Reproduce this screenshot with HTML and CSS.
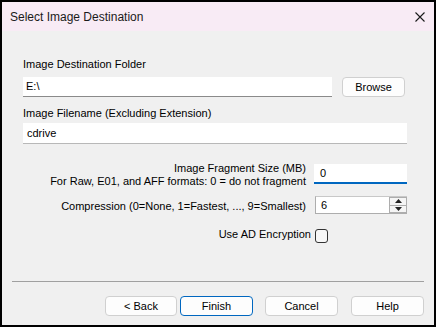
FILE: index.html
```html
<!DOCTYPE html>
<html lang="en">
  <head>
    <meta charset="UTF-8" />
    <meta name="viewport" content="width=device-width, initial-scale=1.0" />
    <title>Select Image Destination</title>
    <link rel="stylesheet" href="styles.css">
  </head>
  <body>
    <div class="window">
      <div class="titlebar">
        <span class="title">Select Image Destination</span>
        <svg class="close" width="10" height="10" viewBox="0 0 10 10">
          <path d="M0.5 0.5 L9.5 9.5 M9.5 0.5 L0.5 9.5" stroke="#1a1a1a" stroke-width="1.1" fill="none" />
        </svg>
      </div>

      <div class="content">
        <div class="label first">Image Destination Folder</div>
        <div class="folderRow">
          <div class="field folder">E:\</div>
          <button class="btn browse">Browse</button>
        </div>

        <div class="label second">Image Filename (Excluding Extension)</div>
        <div class="field filename">cdrive</div>

        <div class="options">
          <div class="optLabel fragLabel">Image Fragment Size (MB)<br>For Raw, E01, and AFF formats: 0 = do not fragment</div>
          <div class="field focused">0</div>

          <div class="optLabel compLabel">Compression (0=None, 1=Fastest, ..., 9=Smallest)</div>
          <div class="spin">
            <div class="spinValue">6</div>
            <div class="spinBtns">
              <span class="arrow"><svg width="7" height="4" viewBox="0 0 7 4"><path d="M3.5 0 L7 4 L0 4 Z" fill="#222" /></svg></span>
              <span class="arrow"><svg width="7" height="4" viewBox="0 0 7 4"><path d="M0 0 L7 0 L3.5 4 Z" fill="#222" /></svg></span>
            </div>
          </div>

          <div class="optLabel encLabel">Use AD Encryption</div>
          <div class="checkCell"><span class="checkbox"></span></div>
        </div>
      </div>

      <div class="footer">
        <div class="separator"></div>
        <div class="buttons">
          <button class="btn">&lt; Back</button>
          <button class="btn default">Finish</button>
          <button class="btn cancel">Cancel</button>
          <button class="btn help">Help</button>
        </div>
      </div>
    </div>
  </body>
</html>
```

FILE: styles.css
```css
* {
  padding: 0;
  margin: 0;
  box-sizing: border-box;
}
body {
  background: #000;
  font-family: "Liberation Sans", Arial, sans-serif;
  font-size: 11px;
  color: #000;
}
.window {
  width: 436px;
  height: 327px;
  border: 2px solid #000;
  background: #f0f0f0;
  display: flex;
  flex-direction: column;
}
.titlebar {
  height: 29px;
  background: #f8ebf5;
  display: flex;
  align-items: center;
  justify-content: space-between;
  padding: 0 9px 0 8px;
}
.title {
  font-size: 12px;
  line-height: 16px;
  color: #1a1a1a;
}
.close {
  display: block;
}
.content {
  padding: 0 27px 0 21px;
}
.label {
  line-height: 16px;
  height: 16px;
}
.label.first {
  margin-top: 25px;
}
.label.second {
  margin-top: 8px;
}
.folderRow {
  display: flex;
  margin-top: 5px;
  gap: 10px;
}
.field {
  background: #fff;
  height: 20px;
  border-bottom: 1px solid #8a8a8a;
  line-height: 19px;
  padding-left: 3px;
}
.folder {
  flex: 1;
}
.filename {
  margin-top: 2px;
  height: 21px;
  line-height: 20px;
  padding-left: 4px;
  border-bottom-color: #b8b8b8;
}
.btn {
  font-family: inherit;
  font-size: 11px;
  height: 20px;
  width: 72px;
  background: #fdfdfd;
  border: 1px solid #d0d0d0;
  border-radius: 4px;
  color: #000;
  line-height: 18px;
}
.browse {
  width: 63px;
  margin-right: 2px;
}
.options {
  display: grid;
  grid-template-columns: 1fr 93px;
  column-gap: 8px;
  margin-top: 18px;
  align-items: start;
}
.optLabel {
  text-align: right;
  line-height: 13px;
  white-space: nowrap;
}
.focused {
  margin-top: 2px;
  border-bottom: 2px solid #0067c0;
  padding-left: 6px;
}
.compLabel {
  margin-top: 12px;
}
.spin {
  margin-top: 8px;
  margin-left: 1px;
  height: 18px;
  display: flex;
  background: #fff;
  border: 1px solid #adadad;
  border-right: none;
  border-top-color: #c8c8c8;
}
.spinValue {
  flex: 1;
  line-height: 16px;
  padding-left: 5px;
}
.spinBtns {
  width: 18px;
  display: flex;
  flex-direction: column;
}
.arrow {
  flex: 1;
  display: flex;
  align-items: center;
  justify-content: center;
  background: #f5f5f5;
  border: 1px solid #adadad;
}
.arrow + .arrow {
  border-top: none;
}
.encLabel {
  margin-top: 14px;
  margin-right: -5px;
}
.checkCell {
  margin-top: 15px;
  height: 14px;
}
.checkbox {
  display: block;
  width: 13px;
  height: 14px;
  border: 1px solid #333;
  border-radius: 3px;
  background: #f7f7f7;
  margin-left: 1px;
}
.footer {
  margin-top: auto;
  padding: 0 10px 9px 10px;
}
.separator {
  height: 1px;
  background: #a0a0a0;
  margin: 0 0 14px 0;
}
.buttons {
  display: flex;
  justify-content: flex-end;
}
.default {
  margin-left: 3px;
  border-color: #0067c0;
  width: 73px;
}
.cancel {
  margin-left: 12px;
  width: 73px;
}
.help {
  margin-left: 13px;
  width: 73px;
}
```
